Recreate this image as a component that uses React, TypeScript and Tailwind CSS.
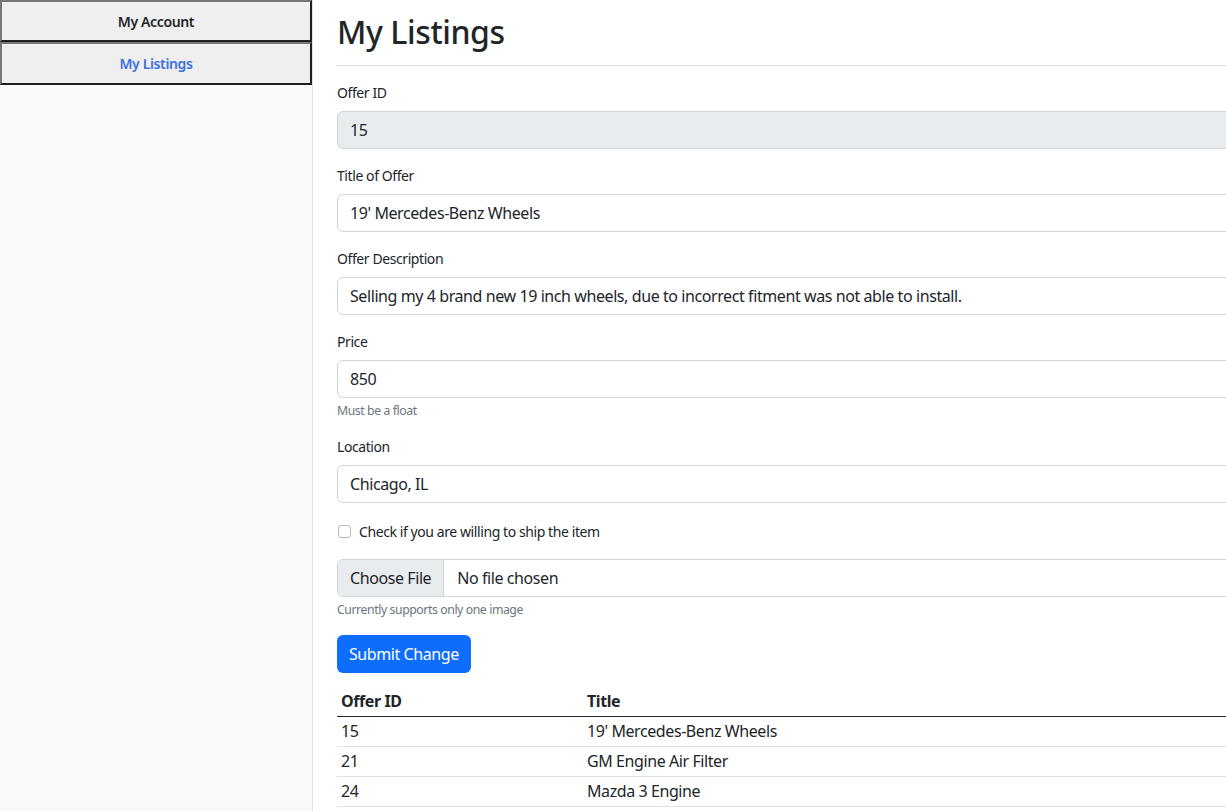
import React from "react";

function Field({ label, value, disabled, help }: { label: string; value: string; disabled?: boolean; help?: string }) {
  return (
    <div className={help ? "" : "mb-4"}>
      <div className="mb-2 h-[21px] text-[14px] leading-[21px] text-[#212529]">{label}</div>
      <div
        className={
          "flex h-[38px] items-center rounded-[6px] border border-[#ced4da] px-[12px] text-[16px] text-[#212529] " +
          (disabled ? "bg-[#e9ecef]" : "bg-white")
        }
      >
        {value}
      </div>
      {help ? (
        <div className="mb-4 mt-1 h-[18px] text-[12.25px] leading-[18px] text-[#6c757d]">{help}</div>
      ) : null}
    </div>
  );
}

export default function App() {
  const rows = [
    ["15", "19' Mercedes-Benz Wheels"],
    ["21", "GM Engine Air Filter"],
    ["24", "Mazda 3 Engine"],
  ];
  return (
    <div className="flex h-[811px] w-[1226px] overflow-hidden bg-white font-['Noto_Sans',sans-serif] tracking-[-0.026em] text-[#212529]">
      <aside className="w-[313px] shrink-0 border-r border-[#dee2e6] bg-[#f8f9fa]">
        <button className="block h-[42px] w-full border-2 border-[#1f1f1f] border-l-[#767676] border-t-[#767676] bg-[#efefef] text-[14px] font-semibold tracking-[-0.026em] text-[#212529]">
          My Account
        </button>
        <button className="block h-[43px] w-full border-2 border-[#1f1f1f] border-l-[#767676] border-t-[#767676] bg-[#efefef] text-[14px] font-semibold tracking-[-0.026em] text-[#3b6fe0]">
          My Listings
        </button>
      </aside>
      <main className="min-w-0 flex-1 overflow-hidden pl-6">
        <div className="w-[1100px]">
          <h2 className="mb-[14px] mt-[13px] text-[32px] font-medium leading-[38px] text-[#212529]">My Listings</h2>
          <hr className="mb-4 border-0 border-t border-[#dcdcdc]" />
          <form>
            <Field label="Offer ID" value="15" disabled />
            <Field label="Title of Offer" value="19' Mercedes-Benz Wheels" />
            <Field
              label="Offer Description"
              value="Selling my 4 brand new 19 inch wheels, due to incorrect fitment was not able to install."
            />
            <Field label="Price" value="850" help="Must be a float" />
            <Field label="Location" value="Chicago, IL" />
            <div className="mb-4 flex h-[24px] items-center gap-2">
              <span className="ml-px inline-block h-[13px] w-[13px] rounded-[3px] border border-[#b5b9bd] bg-white" />
              <span className="text-[14px] leading-[21px]">Check if you are willing to ship the item</span>
            </div>
            <div className="flex h-[38px] items-stretch overflow-hidden rounded-[6px] border border-[#ced4da] text-[16px]">
              <div className="flex items-center border-r border-[#ced4da] bg-[#e9ecef] px-[12px]">Choose File</div>
              <div className="flex items-center px-[13px]">No file chosen</div>
            </div>
            <div className="mb-4 mt-1 h-[18px] text-[12.25px] leading-[18px] text-[#6c757d]">
              Currently supports only one image
            </div>
            <button
              type="button"
              className="h-[38px] rounded-[6px] bg-[#0d6efd] px-[12px] text-[16px] tracking-[-0.026em] text-white"
            >
              Submit Change
            </button>
          </form>
          <table className="mt-[13px] w-full border-collapse text-[16px]">
            <thead>
              <tr className="h-[30px] border-b border-[#212529]">
                <th className="w-[246px] px-1 text-left font-bold">Offer ID</th>
                <th className="px-1 text-left font-bold">Title</th>
              </tr>
            </thead>
            <tbody>
              {rows.map((r) => (
                <tr key={r[0]} className="h-[30px] border-b border-[#dee2e6]">
                  <td className="px-1">{r[0]}</td>
                  <td className="px-1">{r[1]}</td>
                </tr>
              ))}
            </tbody>
          </table>
        </div>
      </main>
    </div>
  );
}
